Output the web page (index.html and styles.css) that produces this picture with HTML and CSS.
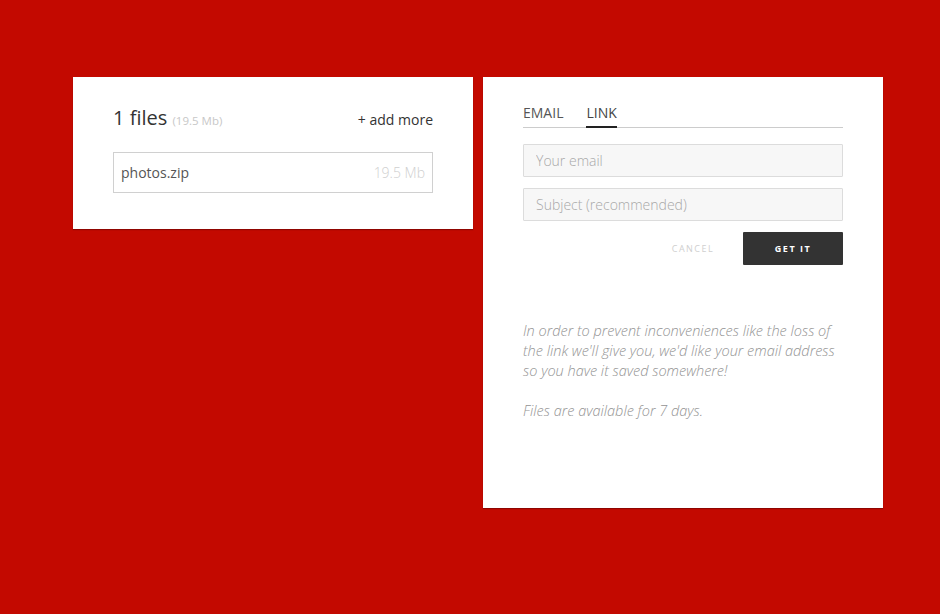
FILE: index.html
```html
<!DOCTYPE html>
<html>
<head>
<meta charset="utf-8">
<link rel="stylesheet" href="styles.css">
</head>
<body>
<div class="page">
  <section class="card files-card">
    <div class="files-head">
      <div class="files-title">1 files <span class="files-total">(19.5 Mb)</span></div>
      <a class="add-more">+ add more</a>
    </div>
    <div class="file-row">
      <span class="file-name">photos.zip</span>
      <span class="file-size">19.5 Mb</span>
    </div>
  </section>
  <section class="card send-card">
    <div class="tabs">
      <span class="tab">EMAIL</span>
      <span class="tab active">LINK</span>
    </div>
    <input class="field field-first" type="text" placeholder="Your email">
    <input class="field" type="text" placeholder="Subject (recommended)">
    <div class="actions">
      <button class="btn-cancel">CANCEL</button>
      <button class="btn-get">GET IT</button>
    </div>
    <p class="note">In order to prevent inconveniences like the loss of the link we'll give you, we'd like your email address so you have it saved somewhere!</p>
    <p class="note">Files are available for 7 days.</p>
  </section>
</div>
</body>
</html>
```

FILE: styles.css
```css
html, body {
  margin: 0;
  height: 100%;
}
body {
  background: #c30900;
  font-family: "Open Sans", "Liberation Sans", sans-serif;
  color: #333;
}
.page {
  display: flex;
  align-items: flex-start;
  gap: 10px;
  padding: 77px 0 0 73px;
}
.card {
  background: #fff;
  width: 400px;
  box-sizing: border-box;
  padding: 0 40px;
  box-shadow: 0 1px 1px rgba(80, 0, 0, 0.45);
}
.files-card {
  padding-top: 25px;
  padding-bottom: 36px;
}
.files-head {
  display: flex;
  justify-content: space-between;
  align-items: baseline;
  height: 33px;
}
.files-title {
  font-size: 20px;
  font-weight: 400;
  color: #333;
  line-height: 32px;
}
.files-total {
  font-size: 11.5px;
  color: #c8c8c8;
}
.add-more {
  font-size: 14px;
  color: #333;
}
.file-row {
  margin-top: 17px;
  height: 41px;
  box-sizing: border-box;
  border: 1px solid #d0d0d0;
  display: flex;
  align-items: center;
  justify-content: space-between;
  padding: 0 7px;
  font-size: 14px;
}
.file-name {
  color: #555;
}
.file-size {
  color: #cfcfcf;
  font-weight: 300;
}
.send-card {
  padding-top: 26px;
  padding-bottom: 87px;
}
.tabs {
  display: flex;
  gap: 23px;
  border-bottom: 1px solid #ccc;
}
.tab {
  font-size: 14px;
  line-height: 20px;
  padding-bottom: 4px;
  color: #555;
}
.tab.active {
  border-bottom: 2px solid #222;
  margin-bottom: -1px;
  padding-bottom: 3px;
  color: #444;
}
.field {
  display: block;
  width: 100%;
  height: 33px;
  box-sizing: border-box;
  margin: 11px 0 0;
  border: 1px solid #dcdcdc;
  border-radius: 1px;
  background: #f7f7f7;
  padding: 0 12px;
  font-family: inherit;
  font-size: 14px;
  font-weight: 300;
  color: #555;
  outline: none;
}
.field-first {
  margin-top: 16px;
}
.field::placeholder {
  color: #a8a8a8;
}
.actions {
  display: flex;
  justify-content: flex-end;
  margin-top: 11px;
}
.actions button {
  width: 100px;
  height: 33px;
  border: 0;
  font-family: inherit;
  font-size: 9px;
  letter-spacing: 1.5px;
  cursor: pointer;
}
.btn-cancel {
  background: transparent;
  color: #cfcfcf;
}
.btn-get {
  background: #333;
  color: #fff;
  font-weight: 700;
  border-radius: 1px;
}
.note {
  margin: 56px 0 0;
  font-size: 14.5px;
  line-height: 20px;
  font-style: italic;
  font-weight: 300;
  color: #939393;
}
.note + .note {
  margin-top: 20px;
}
```
